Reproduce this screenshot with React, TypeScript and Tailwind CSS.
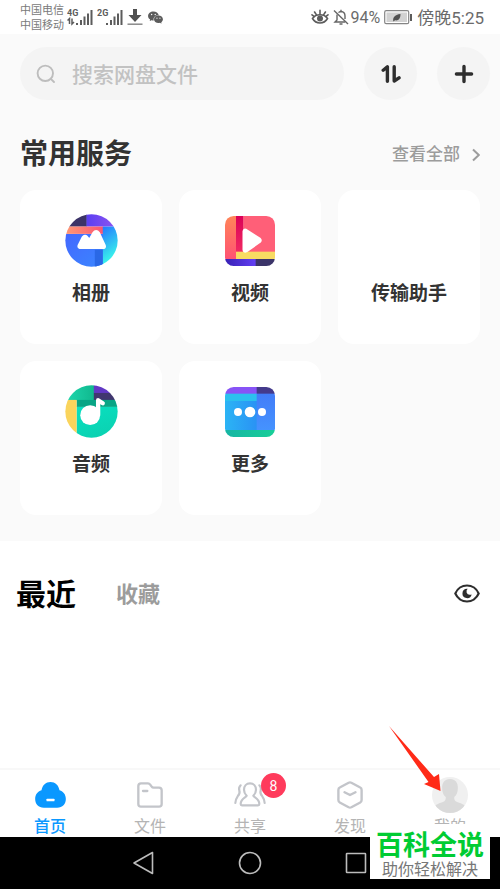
import { AiFillWechat } from "react-icons/ai";

interface IconProps {
  className?: string;
}

interface Service {
  name: string;
  icon?: React.ReactNode;
}

interface NavItem {
  name: string;
  icon: React.ReactNode;
  active?: boolean;
  badge?: number;
}

const SignalIcon = ({ label, data }: { label: string; data?: boolean }) => (
  <svg viewBox="0 0 26 18" className="w-[26px] h-[18px]" fill="#5c5c5c">
    <text
      x="0"
      y="8"
      fontSize="9"
      fontWeight="700"
      fontFamily="Roboto, sans-serif"
    >
      {label}
    </text>
    {data && (
      <path
        d="M0.5 12.5L2.5 10.5V16M5 10.5V16L7 14"
        fill="none"
        stroke="#5c5c5c"
        strokeWidth="1.5"
      />
    )}
    <rect x="9" y="15" width="2" height="2" />
    <rect x="13" y="12" width="2" height="5" />
    <rect x="16.5" y="8.5" width="2" height="8.5" />
    <rect x="20" y="5.5" width="2" height="11.5" />
    <rect x="23.5" y="2" width="2" height="15" />
  </svg>
);

const DownloadIcon = () => (
  <svg viewBox="0 0 16 18" className="w-4 h-[18px]">
    <path d="M6 1h4v6h4.5L8 14 1.5 7H6z" fill="#505050" />
    <path d="M0.5 16.2h15" stroke="#8a8a8a" strokeWidth="1.5" />
  </svg>
);

const EyeCareIcon = () => (
  <svg
    viewBox="0 0 18 16"
    className="w-[18px] h-4"
    fill="none"
    stroke="#5c5c5c"
    strokeWidth="1.6"
    strokeLinecap="round"
  >
    <path d="M1.5 9.5C5 4.5 13 4.5 16.5 9.5C13 15.5 5 15.5 1.5 9.5Z" />
    <path d="M9 1.3V5M3.6 3L5.3 5.6M14.4 3L12.7 5.6M1 5.8L3 7.4M17 5.8L15 7.4" />
    <circle cx="9" cy="9.5" r="2.2" fill="#5c5c5c" />
  </svg>
);

const MutedIcon = () => (
  <svg
    viewBox="0 0 16 16"
    className="w-4 h-4"
    fill="none"
    stroke="#666666"
    strokeWidth="1.4"
  >
    <path d="M5.5 3.6C6 3 6.8 2.6 8 2.5C10.8 2.6 12 4.5 12 7V10M4 5.5V11L2 13H12M6.5 15H9.5M8 2.5V0.8" />
    <path d="M1 1.5L15 15" />
  </svg>
);

const BatteryIcon = () => (
  <svg viewBox="0 0 29 15" className="w-[29px] h-[15px]">
    <rect
      x="0.7"
      y="0.7"
      width="24"
      height="13"
      rx="1.5"
      fill="#fff"
      stroke="#858585"
      strokeWidth="1.2"
    />
    <rect x="2.5" y="2.5" width="20.5" height="9.5" fill="#d2d2d2" />
    <path
      d="M9.5 11.5C8.3 8 10.5 4.5 16.5 4C16.5 8.5 14.5 11 11 10.3Z"
      fill="#505050"
    />
    <rect x="26" y="4" width="2" height="7" fill="#5c5c5c" />
  </svg>
);

const SearchIcon = ({ className }: IconProps) => (
  <svg
    viewBox="0 0 20 20"
    className={className}
    fill="none"
    stroke="#bdbdbd"
    strokeWidth="1.9"
    strokeLinecap="round"
  >
    <circle cx="9.3" cy="9.3" r="7.7" />
    <path d="M14.8 14.8L18 18" />
  </svg>
);

const TransferIcon = () => (
  <svg
    viewBox="0 0 20 20"
    className="w-5 h-5"
    fill="none"
    stroke="#2e2e2e"
    strokeWidth="3.4"
    strokeLinecap="round"
    strokeLinejoin="round"
  >
    <path d="M2.2 6.2L6.4 2.8V17.2" />
    <path d="M13.2 2.8V17L18 13.8" />
  </svg>
);

const PlusIcon = () => (
  <svg
    viewBox="0 0 20 20"
    className="w-5 h-5"
    stroke="#2e2e2e"
    strokeWidth="3.4"
    strokeLinecap="round"
  >
    <path d="M10 2.4V17.6M2.4 10H17.6" />
  </svg>
);

const AlbumIcon = () => (
  <svg viewBox="0 0 160 160" className="w-[53px] h-[53px]">
    <defs>
      <clipPath id="album-clip">
        <circle cx="80" cy="80" r="79" />
      </clipPath>
      <linearGradient id="album-purple">
        <stop stopColor="#5a3ff2" />
        <stop offset="1" stopColor="#9256f0" />
      </linearGradient>
      <linearGradient id="album-orange">
        <stop stopColor="#ff9a75" />
        <stop offset="1" stopColor="#fb5573" />
      </linearGradient>
      <linearGradient id="album-cyan" x2="0.3" y2="1">
        <stop stopColor="#2478ff" />
        <stop offset="0.85" stopColor="#38efec" />
      </linearGradient>
      <linearGradient id="album-blue" x2="1" y2="1">
        <stop stopColor="#4468ff" />
        <stop offset="1" stopColor="#3a86ff" />
      </linearGradient>
    </defs>
    <g clipPath="url(#album-clip)">
      <rect width="66" height="38" fill="#3b3367" />
      <rect x="65" width="95" height="38" fill="url(#album-purple)" />
      <rect y="60" width="116" height="100" fill="url(#album-blue)" />
      <rect y="38" width="115" height="22" fill="url(#album-orange)" />
      <rect x="114" y="38" width="46" height="122" fill="url(#album-cyan)" />
      <rect x="90" y="108" width="24" height="52" fill="#2a68e6" />
    </g>
    <path
      d="M45 101H117Q120 100 118 95L101 58Q94 48 87 58L74 81L65 70Q60 65 55 71L43 95Q41 100 45 101Z"
      fill="#fff"
      stroke="#fff"
      strokeWidth="10"
      strokeLinejoin="round"
    />
  </svg>
);

const VideoIcon = () => (
  <svg viewBox="0 0 150 150" className="w-[50px] h-[50px]">
    <defs>
      <clipPath id="video-clip">
        <rect width="150" height="150" rx="26" />
      </clipPath>
      <linearGradient id="video-orange" x2="0" y2="1">
        <stop stopColor="#ff8558" />
        <stop offset="1" stopColor="#ff5273" />
      </linearGradient>
      <linearGradient id="video-purple">
        <stop stopColor="#3720b4" />
        <stop offset="1" stopColor="#6340f5" />
      </linearGradient>
      <linearGradient id="video-crimson" x2="0" y2="1">
        <stop stopColor="#da0058" />
        <stop offset="1" stopColor="#f02a62" />
      </linearGradient>
    </defs>
    <g clipPath="url(#video-clip)">
      <rect width="34" height="130" fill="url(#video-orange)" />
      <rect x="33" width="23" height="108" fill="url(#video-crimson)" />
      <rect x="55" width="95" height="108" fill="#ff5f78" />
      <rect x="33" y="107" width="117" height="23" fill="#f8db62" />
      <rect y="129" width="93" height="21" fill="url(#video-purple)" />
      <rect x="92" y="129" width="58" height="21" fill="#3b3469" />
    </g>
    <path
      d="M58 46Q59 42 63 44L103 70Q106 73 103 76L63 104Q58 106 58 101Z"
      fill="#fff"
      stroke="#fff"
      strokeWidth="11"
      strokeLinejoin="round"
    />
  </svg>
);

const AudioIcon = () => (
  <svg viewBox="0 0 160 160" className="w-[53px] h-[53px]">
    <defs>
      <clipPath id="audio-clip">
        <circle cx="80" cy="80" r="79" />
      </clipPath>
      <linearGradient id="audio-green">
        <stop stopColor="#1fd8ae" />
        <stop offset="1" stopColor="#10b88e" />
      </linearGradient>
      <linearGradient id="audio-teal" x2="0.4" y2="1">
        <stop stopColor="#08e0c0" />
        <stop offset="1" stopColor="#0bd2b2" />
      </linearGradient>
    </defs>
    <g clipPath="url(#audio-clip)">
      <rect width="88" height="46" fill="url(#audio-green)" />
      <rect x="87" width="73" height="25" fill="#6138c4" />
      <rect x="87" y="24" width="73" height="22" fill="#41366f" />
      <rect x="35" y="65" width="125" height="95" fill="url(#audio-teal)" />
      <rect x="35" y="45" width="125" height="21" fill="#08a585" />
      <rect y="45" width="35" height="115" fill="#fad45c" />
    </g>
    <circle cx="76" cy="91" r="30" fill="#fff" />
    <path
      d="M100 90V46L114 55"
      fill="none"
      stroke="#fff"
      strokeWidth="13"
      strokeLinecap="round"
      strokeLinejoin="round"
    />
  </svg>
);

const MoreIcon = () => (
  <svg viewBox="0 0 150 150" className="w-[50px] h-[50px]">
    <defs>
      <clipPath id="more-clip">
        <rect width="150" height="150" rx="26" />
      </clipPath>
      <linearGradient id="more-green">
        <stop stopColor="#16b5a4" />
        <stop offset="1" stopColor="#18cf98" />
      </linearGradient>
      <linearGradient id="more-blue">
        <stop stopColor="#2bb4f5" />
        <stop offset="1" stopColor="#2a92f4" />
      </linearGradient>
      <linearGradient id="more-right" x2="0" y2="1">
        <stop stopColor="#427cf8" />
        <stop offset="1" stopColor="#4593ff" />
      </linearGradient>
    </defs>
    <g clipPath="url(#more-clip)">
      <rect width="96" height="21" fill="#8753f6" />
      <rect x="95" width="55" height="21" fill="#443a8c" />
      <rect y="42" width="96" height="88" fill="url(#more-blue)" />
      <rect y="20" width="96" height="22" fill="#2bc0ee" />
      <rect x="95" y="20" width="55" height="110" fill="url(#more-right)" />
      <rect y="129" width="150" height="21" fill="url(#more-green)" />
    </g>
    <g fill="#fff">
      <circle cx="39" cy="75" r="12" />
      <circle cx="75" cy="75" r="16" />
      <circle cx="111" cy="75" r="12" />
    </g>
  </svg>
);

const EyeIcon = () => (
  <svg viewBox="0 0 78 56" className="w-[26px] h-[19px]" fill="none">
    <path
      d="M4 28C10 14 24 4 39 4S68 14 74 28C68 42 54 52 39 52S10 42 4 28Z"
      stroke="#2e2e2e"
      strokeWidth="6.5"
    />
    <path
      d="M39 14A14 14 0 1 0 53 31Q41 34 38 26Q36 19 41 14Z"
      fill="#2e2e2e"
    />
  </svg>
);

const HomeIcon = () => (
  <svg viewBox="0 0 92 78" className="w-[31px] h-[26px]">
    <path
      d="M26 77C10 77 0 66 0 51C0 38 7 29 19 25C22 9 32 0 46 0S70 9 73 25C85 29 92 38 92 51C92 66 82 77 66 77Z"
      fill="#0a98ff"
    />
    <rect x="34" y="50" width="24" height="8" rx="2" fill="#fff" />
  </svg>
);

const FolderIcon = () => (
  <svg
    viewBox="0 0 78 78"
    className="w-[26px] h-[26px]"
    fill="none"
    stroke="#c3c5ca"
    strokeWidth="7"
    strokeLinejoin="round"
    strokeLinecap="round"
  >
    <path d="M12 4H33Q37 4 39 7L44 14Q46 17 50 17H66Q74 17 74 25V66Q74 74 66 74H12Q4 74 4 66V12Q4 4 12 4Z" />
    <path d="M18 27H31" />
  </svg>
);

const ShareIcon = () => (
  <svg
    viewBox="0 0 96 78"
    className="w-8 h-[26px]"
    fill="none"
    stroke="#c3c5ca"
    strokeWidth="6.5"
    strokeLinejoin="round"
    strokeLinecap="round"
  >
    <path d="M48 4C37 4 30 12 30 23C30 30 33 36 38 41C37 46 20 49 20 66Q20 70 24 70H72Q76 70 76 66C76 49 59 46 58 41C63 36 66 30 66 23C66 12 59 4 48 4Z" />
    <path d="M20 10Q13 17 16 26T11 43Q5 51 4 63" />
    <path d="M76 10Q83 17 80 26T85 43Q91 51 92 63" />
  </svg>
);

const DiscoverIcon = () => (
  <svg
    viewBox="0 0 76 82"
    className="w-[26px] h-7"
    fill="none"
    stroke="#c3c5ca"
    strokeWidth="7"
    strokeLinejoin="round"
    strokeLinecap="round"
  >
    <path d="M34 5Q38 3 42 5L68 19Q72 21 72 26V56Q72 61 68 63L42 77Q38 79 34 77L8 63Q4 61 4 56V26Q4 21 8 19Z" />
    <path d="M22 33L38 41L54 33" />
  </svg>
);

const AvatarIcon = () => (
  <svg viewBox="0 0 110 110" className="w-9 h-9">
    <defs>
      <clipPath id="avatar-clip">
        <circle cx="55" cy="55" r="55" />
      </clipPath>
    </defs>
    <g clipPath="url(#avatar-clip)">
      <rect width="110" height="110" fill="#f0f0f0" />
      <path
        d="M55 6C39 6 30 18 31 34C31 46 35 55 42 61C43 74 36 76 22 80Q10 84 6 94V110H104V94Q100 84 88 80C74 76 67 74 68 61C75 55 79 46 79 34C80 18 71 6 55 6Z"
        fill="#dadada"
      />
    </g>
  </svg>
);

const services: Service[] = [
  { name: "相册", icon: <AlbumIcon /> },
  { name: "视频", icon: <VideoIcon /> },
  { name: "传输助手" },
  { name: "音频", icon: <AudioIcon /> },
  { name: "更多", icon: <MoreIcon /> },
];

const navItems: NavItem[] = [
  { name: "首页", icon: <HomeIcon />, active: true },
  { name: "文件", icon: <FolderIcon /> },
  { name: "共享", icon: <ShareIcon />, badge: 8 },
  { name: "发现", icon: <DiscoverIcon /> },
  { name: "我的", icon: <AvatarIcon /> },
];

const StatusBar = () => (
  <div className="flex items-center justify-between bg-white pl-5 pr-4 h-[34px] text-[#6b6b6b]">
    <div className="flex items-center">
      <div className="text-[11px] leading-[15px] mr-[3px] pt-[2px] text-[#7a7a7a]">
        <p>中国电信</p>
        <p>中国移动</p>
      </div>
      <SignalIcon label="4G" data />
      <span className="w-1" />
      <SignalIcon label="2G" />
      <span className="w-1" />
      <DownloadIcon />
      <AiFillWechat className="ml-1 w-[17px] h-[17px] text-[#5c5c5c]" />
    </div>
    <div className="flex items-center text-[17px] leading-5">
      <EyeCareIcon />
      <span className="w-1" />
      <MutedIcon />
      <span className="ml-[2px] mr-1 pt-[2px] text-base">94%</span>
      <BatteryIcon />
      <span className="ml-1 pt-[2px]">傍晚5:25</span>
    </div>
  </div>
);

const SearchBar = () => (
  <div className="flex items-center pl-5 pr-[10px] pt-[13px]">
    <label className="flex flex-1 min-w-0 items-center h-[53px] rounded-full bg-[#f4f4f4] pl-4 mr-5">
      <SearchIcon className="w-5 h-5 shrink-0" />
      <input
        type="search"
        aria-label="搜索网盘文件"
        placeholder="搜索网盘文件"
        className="flex-1 min-w-0 ml-4 pt-1 bg-transparent text-[21px] font-medium text-[#333] placeholder:text-[#c2c2c2] outline-none"
      />
    </label>
    <button
      aria-label="传输列表"
      className="flex items-center justify-center w-[53px] h-[53px] rounded-full bg-[#f4f4f4] mr-5"
    >
      <TransferIcon />
    </button>
    <button
      aria-label="新建"
      className="flex items-center justify-center w-[53px] h-[53px] rounded-full bg-[#f4f4f4]"
    >
      <PlusIcon />
    </button>
  </div>
);

const ServiceGrid = () => (
  <section className="px-5 pt-[35px] pb-[26px]">
    <header className="flex items-center justify-between mb-[15px]">
      <h2 className="text-[28px] leading-10 font-bold text-[#333]">
        常用服务
      </h2>
      <a
        href="#services"
        className="flex items-center gap-3 text-[17px] font-medium text-[#9c9c9c]"
      >
        查看全部
        <svg
          viewBox="0 0 8 14"
          className="w-2 h-[14px]"
          fill="none"
          stroke="#9c9c9c"
          strokeWidth="2"
        >
          <path d="M1 1.5L6.8 7L1 12.5" />
        </svg>
      </a>
    </header>
    <div className="grid grid-cols-3 gap-[17px]">
      {services.map((service) => (
        <button
          key={service.name}
          className="flex flex-col items-center rounded-2xl bg-white pt-6 pb-9"
        >
          <span className="flex items-center justify-center h-[53px]">
            {service.icon}
          </span>
          <span className="mt-3 text-[19px] leading-[29px] font-bold text-[#333]">
            {service.name}
          </span>
        </button>
      ))}
    </div>
  </section>
);

const BottomNav = () => (
  <nav className="grid grid-cols-5 border-t-2 border-[#f8f8f8] bg-white pt-[7px]">
    {navItems.map((item) => (
      <a
        key={item.name}
        href={`#${item.name}`}
        className={`flex flex-col items-center gap-1 text-base leading-5 ${
          item.active ? "font-medium text-[#0a98ff]" : "text-[#b4b4b4]"
        }`}
      >
        <span className="relative flex items-center justify-center h-9">
          {item.icon}
          {item.badge && (
            <span className="absolute -top-1 left-[27px] flex items-center justify-center w-[25px] h-[25px] rounded-full bg-[#ff3b5c] text-sm text-white">
              {item.badge}
            </span>
          )}
        </span>
        {item.name}
      </a>
    ))}
  </nav>
);

const SystemNav = () => (
  <div className="flex items-center justify-center gap-[82px] h-[52px] bg-black">
    <button aria-label="返回">
      <svg
        viewBox="0 0 24 24"
        className="w-6 h-6"
        fill="none"
        stroke="#bcbcbc"
        strokeWidth="1.6"
        strokeLinejoin="round"
      >
        <path d="M20.5 1.5V22.5L2 12Z" />
      </svg>
    </button>
    <button aria-label="主屏幕">
      <svg
        viewBox="0 0 24 24"
        className="w-6 h-6"
        fill="none"
        stroke="#bcbcbc"
        strokeWidth="1.6"
      >
        <circle cx="12" cy="12" r="10.5" />
      </svg>
    </button>
    <button aria-label="最近任务">
      <svg
        viewBox="0 0 24 24"
        className="w-6 h-6"
        fill="none"
        stroke="#bcbcbc"
        strokeWidth="1.6"
      >
        <rect x="2.5" y="2.5" width="19" height="19" rx="0.5" />
      </svg>
    </button>
  </div>
);

export default function App() {
  return (
    <div className="relative flex flex-col min-h-screen bg-white font-[Roboto,'Noto_Sans_CJK_SC',sans-serif]">
      <StatusBar />
      <div className="bg-[#fafafa]">
        <SearchBar />
        <ServiceGrid />
      </div>

      <main className="flex-1 px-4 pt-7">
        <div className="flex items-center">
          <button className="pt-1 text-[30px] leading-[44px] font-bold text-black">
            最近
          </button>
          <button className="ml-10 pt-1 text-[22px] leading-8 font-bold text-[#9c9c9c]">
            收藏
          </button>
          <button aria-label="显示或隐藏" className="ml-auto mr-1">
            <EyeIcon />
          </button>
        </div>
      </main>

      <BottomNav />
      <SystemNav />

      {/* pointer towards the profile tab */}
      <svg
        viewBox="0 0 52 66"
        className="absolute right-[59px] bottom-[97px] w-[52px] h-[66px]"
        fill="#ff2a17"
      >
        <path d="M0 0L45 51L50 48L51.5 65L35 58L39.5 56Z" />
      </svg>

      <div className="absolute right-[10px] bottom-[10px] w-[120px] bg-white pt-2 text-center">
        <p className="text-[27px] leading-7 font-bold text-[#00cc33]">
          百科全说
        </p>
        <p className="text-base leading-[19px] text-[#777]">助你轻松解决</p>
      </div>
    </div>
  );
}
